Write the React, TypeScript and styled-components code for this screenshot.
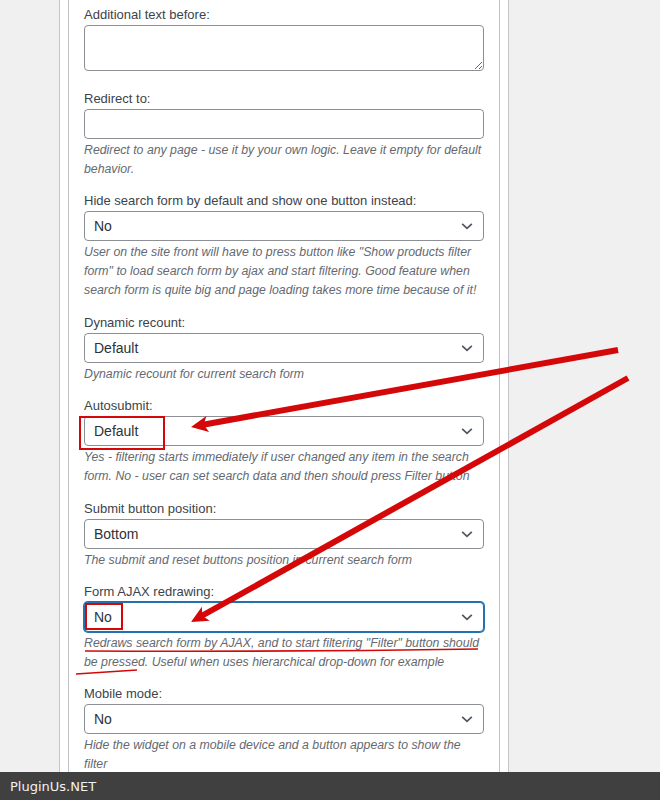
import React from 'react';
import styled, { createGlobalStyle, css } from 'styled-components';

const GlobalStyle = createGlobalStyle`
   html, body {
      margin: 0;
      padding: 0;
      background: #f0f0f1;
      font-family: "Liberation Sans", Arial, sans-serif;
   }
`;

const Page = styled.div`
   position: relative;
   width: 660px;
   height: 800px;
   overflow: hidden;
   padding-left: 59px;
   box-sizing: border-box;
`;

const OuterPanel = styled.div`
   width: 450px;
   height: 100%;
   box-sizing: border-box;
   background: #fff;
   border-left: 1px solid #c3c4c7;
   border-right: 1px solid #c3c4c7;
   padding: 0 8px;
`;

const InnerPanel = styled.div`
   height: 100%;
   box-sizing: border-box;
   border-left: 1px solid #c3c4c7;
   border-right: 1px solid #c3c4c7;
   padding: 5px 15px 0;
`;

const Field = styled.div<{ $gap?: number }>`
   padding-bottom: ${(p) => p.$gap ?? 12.4}px;
`;

const Label = styled.div`
   font-size: 13px;
   line-height: 20px;
   color: #3c434a;
`;

const controlBase = css`
   box-sizing: border-box;
   width: 400px;
   border: 1px solid #8c8f94;
   border-radius: 4px;
   background: #fff;
   font-family: inherit;
   font-size: 14px;
   color: #2c3338;
`;

const TextArea = styled.textarea`
   ${controlBase};
   display: block;
   height: 46px;
   resize: vertical;
`;

const TextInput = styled.input`
   ${controlBase};
   display: block;
   height: 30px;
   padding: 0 8px;
`;

const SelectBox = styled.div<{ $focused?: boolean }>`
   ${controlBase};
   height: 30px;
   display: flex;
   align-items: center;
   justify-content: space-between;
   padding: 0 9px 0 9px;
   ${(p) =>
      p.$focused &&
      css`
         border-color: #2271b1;
         box-shadow: 0 0 0 1px #2271b1;
      `}
`;

const Chevron = styled.svg`
   width: 12px;
   height: 8px;
   margin-right: 1px;
`;

const Desc = styled.p`
   margin: 2px 0 0;
   font-size: 12.3px;
   line-height: 19px;
   font-style: italic;
   color: #646970;
`;

const BottomBar = styled.div`
   position: absolute;
   left: 0;
   right: 0;
   bottom: 0;
   height: 28px;
   background: #404040;
   color: #f2f2f2;
   font-family: "DejaVu Sans", sans-serif;
   font-size: 13px;
   display: flex;
   align-items: center;
   padding-left: 10px;
`;

const Overlay = styled.svg`
   position: absolute;
   left: 0;
   top: 0;
   pointer-events: none;
`;

const Select = ({ value, focused }: { value: string; focused?: boolean }) => (
   <SelectBox $focused={focused}>
      <span>{value}</span>
      <Chevron viewBox="0 0 12 8">
         <path d="M1.2 1.8l4.8 4.6 4.8-4.6" fill="none" stroke="#50575e" strokeWidth="1.7" />
      </Chevron>
   </SelectBox>
);

const fields = [
   {
      label: 'Hide search form by default and show one button instead:',
      value: 'No',
      desc: 'User on the site front will have to press button like "Show products filter form" to load search form by ajax and start filtering. Good feature when search form is quite big and page loading takes more time because of it!',
   },
   { label: 'Dynamic recount:', value: 'Default', desc: 'Dynamic recount for current search form' },
   {
      label: 'Autosubmit:',
      value: 'Default',
      desc: 'Yes - filtering starts immediately if user changed any item in the search form. No - user can set search data and then should press Filter button',
   },
   {
      label: 'Submit button position:',
      value: 'Bottom',
      desc: 'The submit and reset buttons position in current search form',
   },
   {
      label: 'Form AJAX redrawing:',
      value: 'No',
      focused: true,
      desc: 'Redraws search form by AJAX, and to start filtering "Filter" button should be pressed. Useful when uses hierarchical drop-down for example',
   },
   {
      label: 'Mobile mode:',
      value: 'No',
      desc: 'Hide the widget on a mobile device and a button appears to show the filter',
   },
];

const RED = '#d40808';

// hand-drawn markup on top of the screenshot
const Annotations = () => (
   <Overlay width="660" height="800" viewBox="0 0 660 800">
      <line x1="203" y1="424.7" x2="618" y2="350" stroke={RED} strokeWidth="6" />
      <polygon points="191,427 209.1,431.9 203.8,424.7 206.3,416.1" fill={RED} />
      <line x1="201.5" y1="616" x2="628" y2="378" stroke={RED} strokeWidth="6" />
      <polygon points="191,622 209.7,620.7 202.3,615.7 201.9,606.7" fill={RED} />
      <rect x="80" y="417" width="84" height="32" fill="none" stroke={RED} strokeWidth="2" />
      <rect x="86" y="604" width="36" height="25" fill="none" stroke={RED} strokeWidth="2" />
      <path d="M85 651 Q 280 652 478 649" fill="none" stroke={RED} strokeWidth="1.6" />
      <path d="M76 674 L137 670" fill="none" stroke={RED} strokeWidth="1.4" />
   </Overlay>
);

export default function App() {
   return (
      <>
         <GlobalStyle />
         <Page>
            <OuterPanel>
               <InnerPanel>
                  <Field $gap={18}>
                     <Label>Additional text before:</Label>
                     <TextArea />
                  </Field>
                  <Field>
                     <Label>Redirect to:</Label>
                     <TextInput />
                     <Desc>
                        Redirect to any page - use it by your own logic. Leave it empty for default behavior.
                     </Desc>
                  </Field>
                  {fields.map((f) => (
                     <Field key={f.label}>
                        <Label>{f.label}</Label>
                        <Select value={f.value} focused={f.focused} />
                        <Desc>{f.desc}</Desc>
                     </Field>
                  ))}
               </InnerPanel>
            </OuterPanel>
            <Annotations />
            <BottomBar>PluginUs.NET</BottomBar>
         </Page>
      </>
   );
}
